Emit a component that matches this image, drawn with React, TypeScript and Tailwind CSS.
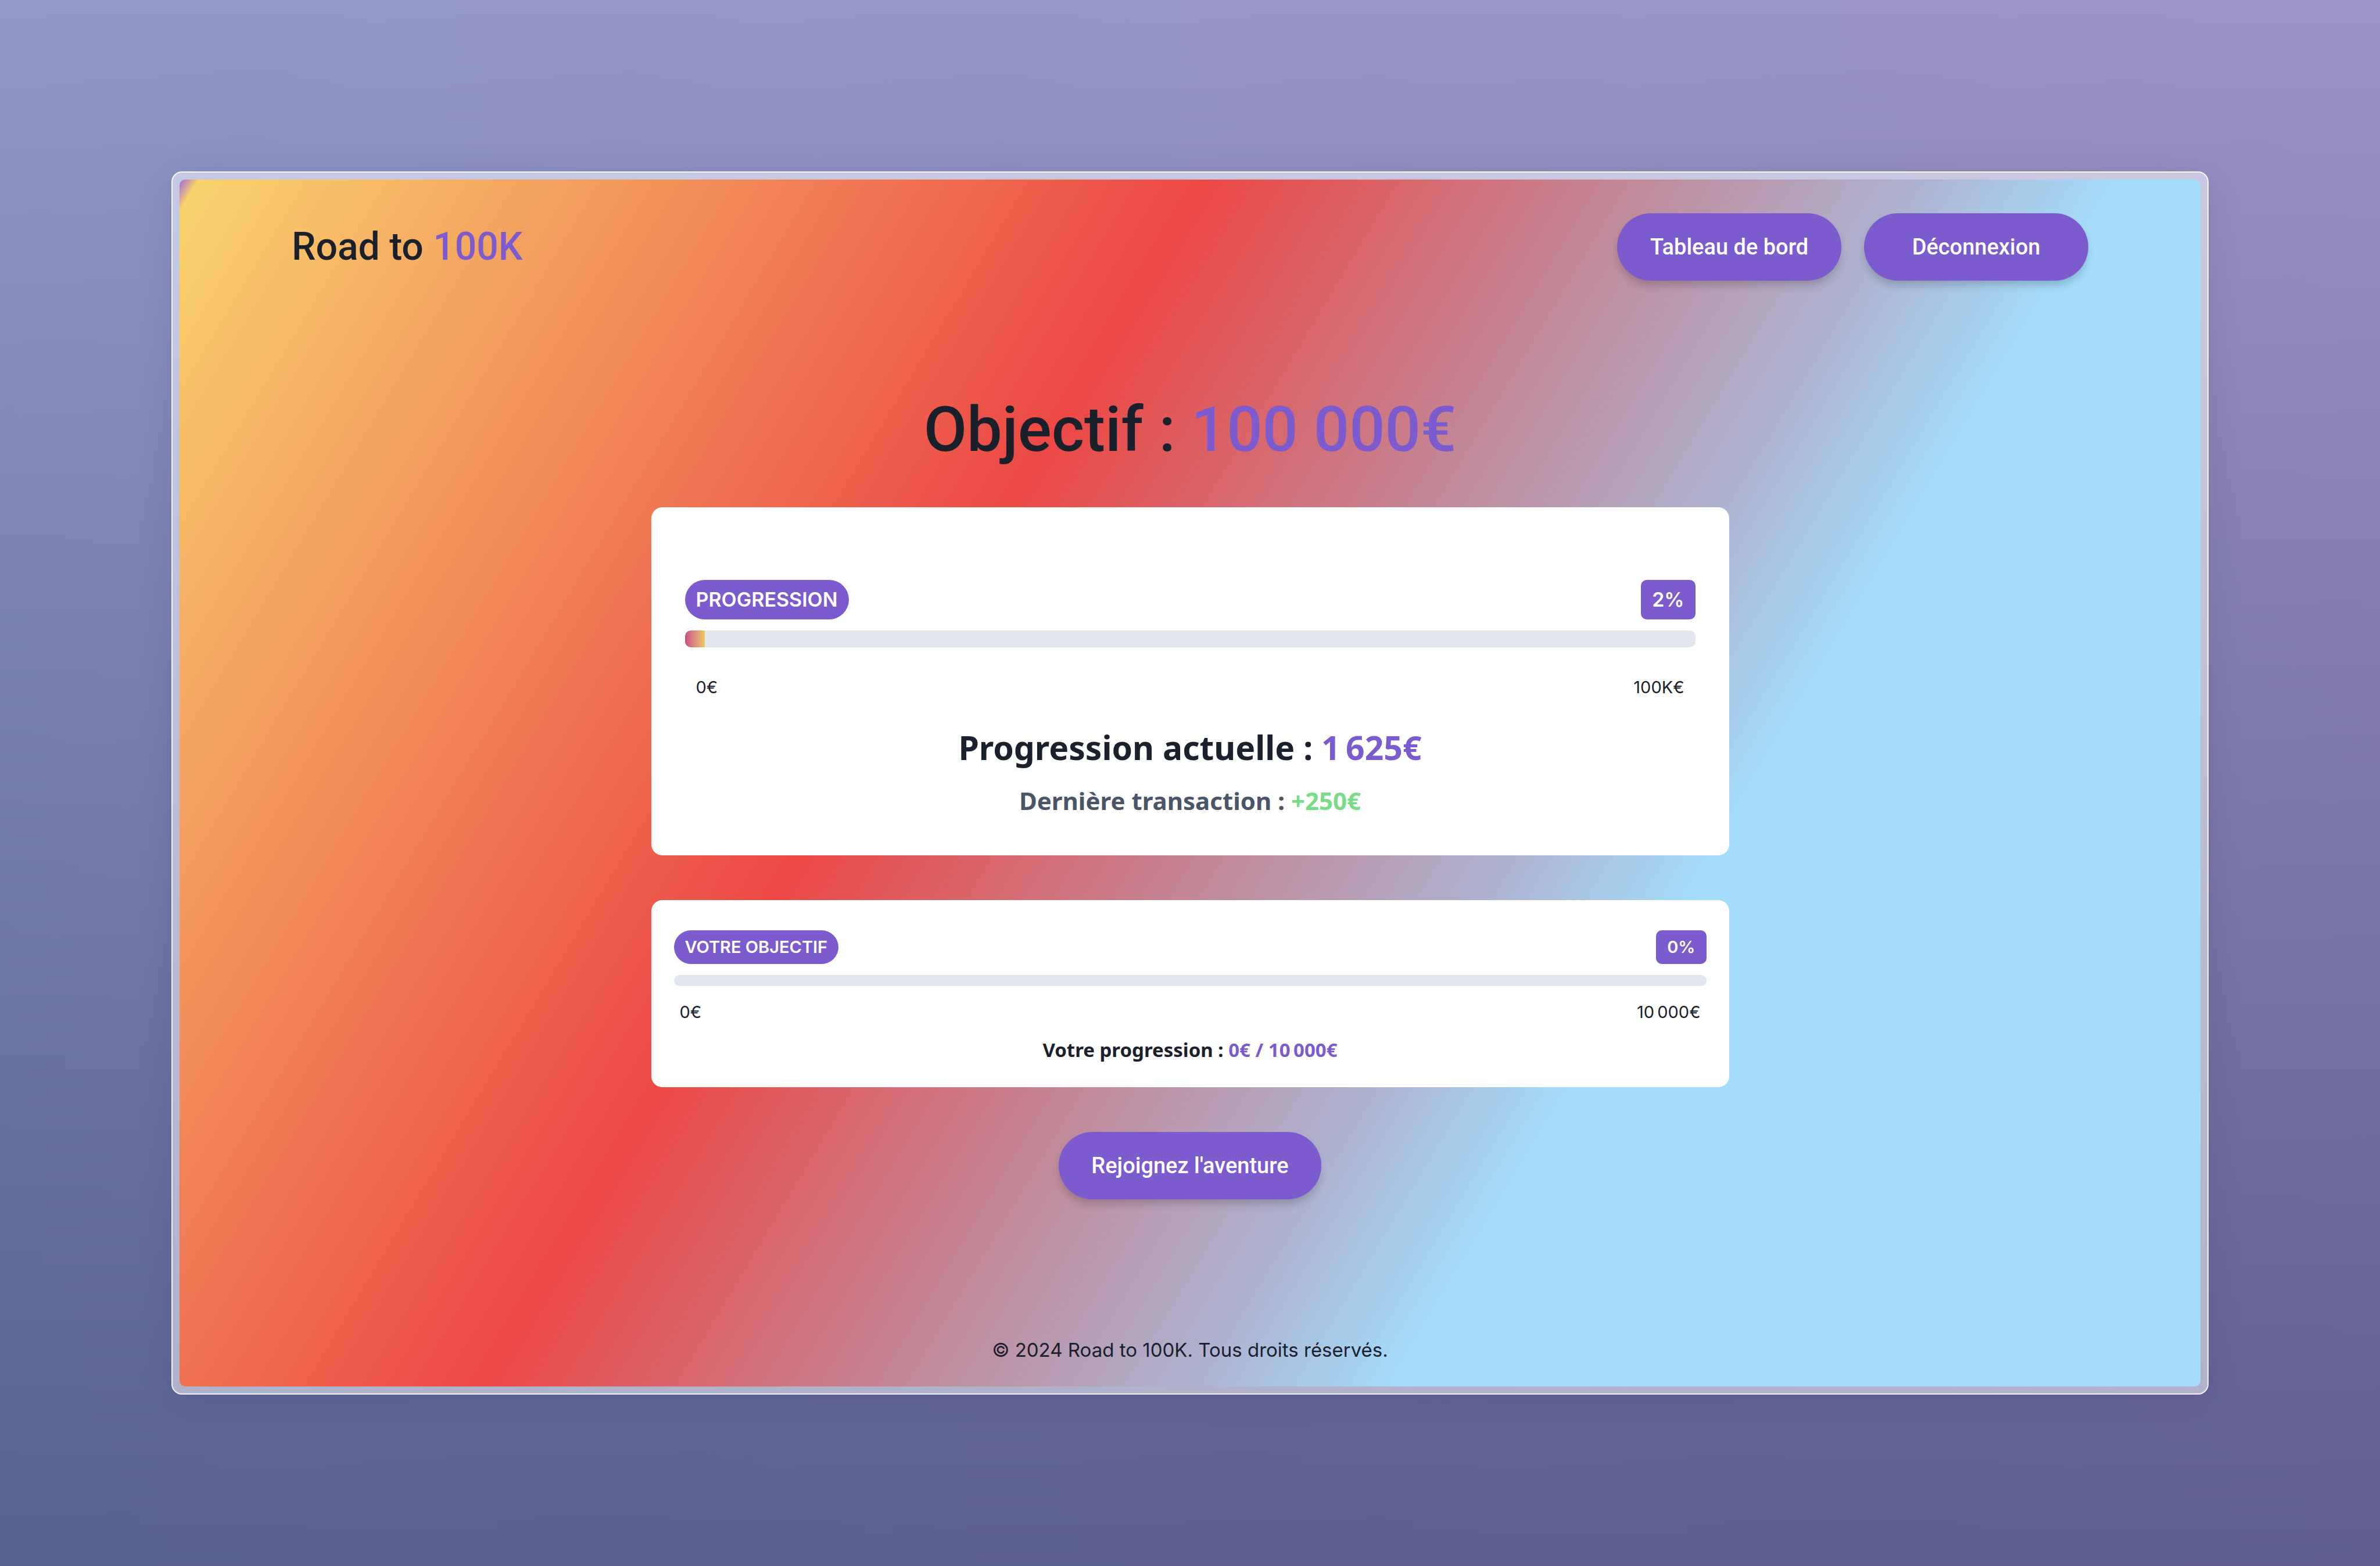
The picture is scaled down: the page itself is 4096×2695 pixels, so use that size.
import React from "react";

type PillButtonProps = { children: React.ReactNode };

function PillButton({ children }: PillButtonProps) {
  return (
    <button
      type="button"
      className="h-[116px] min-w-[386px] rounded-full bg-[#7b5bcd] px-14 font-['Roboto',sans-serif] text-[38px] leading-[48px] font-medium text-white shadow-[0_10px_14px_-2px_rgba(0,0,0,0.18)]"
    >
      {children}
    </button>
  );
}

type ProgressBarProps = { label: string; value: number; className: string };

function ProgressBar({ label, value, className }: ProgressBarProps) {
  return (
    <div
      role="progressbar"
      aria-label={label}
      aria-valuenow={value}
      aria-valuemin={0}
      aria-valuemax={100}
      className={`overflow-hidden rounded-[10px] bg-[#e2e7ee] ${className}`}
    >
      <div
        className="h-full bg-linear-to-r from-[#c84b86] to-[#ecc95f]"
        style={{ width: `${value}%` }}
      />
    </div>
  );
}

export default function App() {
  return (
    <div className="flex min-h-screen flex-col bg-[linear-gradient(to_bottom,rgba(0,13,60,0),rgba(0,13,60,0.4)),linear-gradient(to_right,#9099c8,#9d93c6)] p-[295px] font-['Inter',sans-serif] text-[#1a202c]">
      <div className="flex flex-1 flex-col rounded-[18px] border-2 border-white/85 bg-white/50 p-3 shadow-[0_8px_60px_rgba(40,30,90,0.12)]">
        <div className="flex flex-1 flex-col rounded-[10px] bg-[linear-gradient(121deg,#a066dc_0%,#f8d26d_0.7%,#ec4845_37.4%,#c08b9c_53.5%,#aeb1ce_63%,#a3ddfb_70.9%)]">
          <header className="flex items-center justify-between px-[193px] py-[58px]">
            <a href="#" className="font-['Roboto',sans-serif] text-[66px] leading-[88px] font-medium">
              Road to <span className="text-[#7b5bcd]">100K</span>
            </a>
            <nav className="flex gap-[39px]">
              <PillButton>Tableau de bord</PillButton>
              <PillButton>Déconnexion</PillButton>
            </nav>
          </header>

          <main className="mx-auto flex w-full max-w-[1855px] flex-1 flex-col items-center">
            <h1 className="mt-32 mb-16 font-['Roboto',sans-serif] text-[108px] leading-[140px] font-medium">
              Objectif : <span className="text-[#7b5bcd]">100 000€</span>
            </h1>

            <section className="w-full rounded-[19px] bg-white px-[58px] pt-[125px] pb-[65px]">
              <div className="mb-[19px] flex items-center justify-between text-[34px] leading-[68px] font-semibold text-white">
                <span className="rounded-full bg-[#7b5bcd] px-[19px]">PROGRESSION</span>
                <span className="rounded-[10px] bg-[#7b5bcd] px-[19px]">2%</span>
              </div>
              <ProgressBar label="Progression" value={2} className="h-[29px]" />
              <div className="mt-[47px] flex justify-between px-[19px] text-[29px] leading-[43px]">
                <span>0€</span>
                <span>100K€</span>
              </div>
              <p className="mt-[47px] text-center font-['Noto_Sans',sans-serif] text-[57px] leading-[70px] font-bold">
                Progression actuelle : <span className="text-[#7b5bcd]">1{"\u202f"}625€</span>
              </p>
              <p className="mt-7 text-center font-['Noto_Sans',sans-serif] text-[42px] leading-[58px] font-bold text-[#4a5568]">
                Dernière transaction : <span className="text-[#77dc85]">+250€</span>
              </p>
            </section>

            <section className="mt-[77px] w-full rounded-[19px] bg-white px-[39px] pt-[52px] pb-10">
              <div className="mb-[19px] flex items-center justify-between text-[29px] leading-[58px] font-semibold text-white">
                <span className="rounded-full bg-[#7b5bcd] px-[19px]">VOTRE OBJECTIF</span>
                <span className="rounded-[10px] bg-[#7b5bcd] px-[19px]">0%</span>
              </div>
              <ProgressBar label="Votre objectif" value={0} className="h-[19px]" />
              <div className="mt-[23px] flex justify-between px-[10px] text-[29px] leading-[43px]">
                <span>0€</span>
                <span>10{"\u202f"}000€</span>
              </div>
              <p className="mt-5 text-center font-['Noto_Sans',sans-serif] text-[33px] leading-[48px] font-bold">
                Votre progression : <span className="text-[#7b5bcd]">0€ / 10{"\u202f"}000€</span>
              </p>
            </section>

            <div className="mt-[77px]">
              <PillButton>Rejoignez l'aventure</PillButton>
            </div>
          </main>

          <footer className="pb-[38px] text-center text-[33px] leading-[50px]">
            © 2024 Road to 100K. Tous droits réservés.
          </footer>
        </div>
      </div>
    </div>
  );
}
